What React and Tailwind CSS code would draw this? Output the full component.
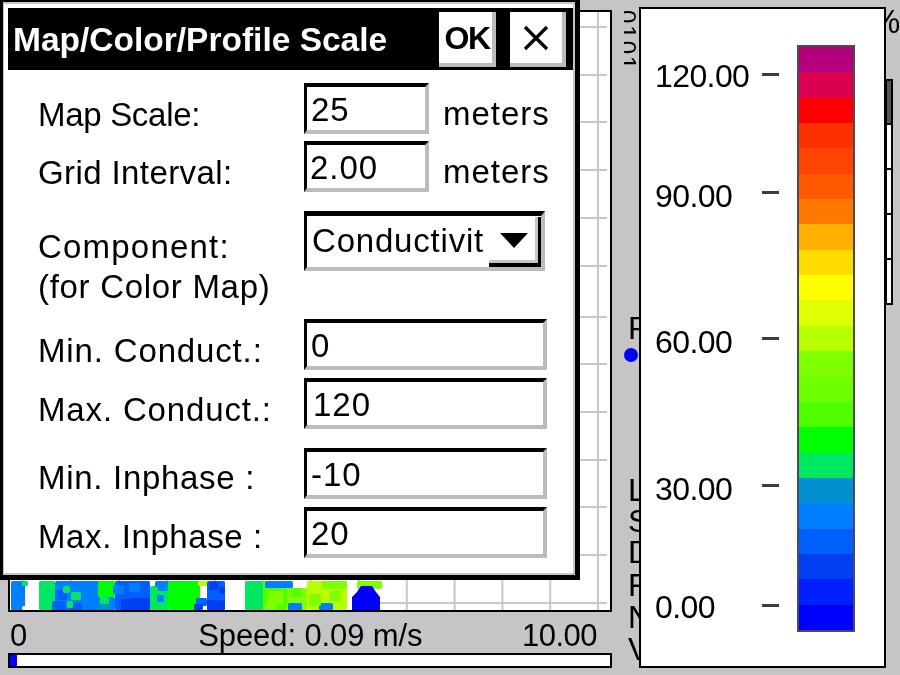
const FONT = "font-['Liberation_Sans',Arial,sans-serif]";

const bands = ['#b4007c','#dc0050','#ff0000','#ff3000','#ff4400','#ff5a00','#ff7800','#ffb000','#ffdc00','#ffff00','#e0ff00','#b8ff00','#80ff00','#70ff00','#50ff00','#00ff00','#00e860','#0090d0','#0080ff','#0060ff','#0040f0','#0020ff','#0000ff'];

const rects = [
  [11,581,14,29,'#0080ff'],[22,581,6,5,'#00e860'],[22,606,18,4,'#ffffff'],
  [39,581,16,29,'#00e860'],[55,581,45,29,'#0080ff'],[98,581,17,16,'#00ff00'],[98,597,17,13,'#0080ff'],
  [115,581,35,29,'#0060ff'],[130,598,20,12,'#0040f0'],[150,586,18,24,'#00e860'],[155,581,15,6,'#0080ff'],
  [168,581,32,29,'#00ff00'],[198,581,10,5,'#b8ff00'],[207,581,18,29,'#0060ff'],[207,600,18,10,'#0040f0'],
  [245,581,18,29,'#00e860'],[263,581,24,29,'#50ff00'],[265,581,28,7,'#0080ff'],[287,588,20,22,'#80ff00'],
  [307,581,40,29,'#b8ff00'],[322,581,25,8,'#80ff00'],[357,581,25,8,'#80ff00'],[352,606,28,4,'#0000ff'],
  // mosaic chips
  [55,590,12,10,'#0060ff'],[52,601,14,9,'#0060ff'],[68,603,14,7,'#0060ff'],[63,586,7,7,'#00e860'],[71,592,10,8,'#00e860'],[67,601,6,7,'#00e860'],
  [84,583,13,12,'#0080ff'],[100,596,9,9,'#00e860'],[98,604,12,6,'#0090d0'],[113,585,11,9,'#0080ff'],[129,583,11,9,'#0080ff'],[121,599,11,11,'#0040f0'],
  [157,595,7,7,'#0080ff'],[158,582,10,9,'#0080ff'],[196,598,11,8,'#0060ff'],[194,604,9,6,'#0040f0'],
  [209,582,9,8,'#0040f0'],[219,587,6,7,'#0040f0'],[268,591,15,14,'#80ff00'],[265,602,11,8,'#80ff00'],[288,603,14,7,'#0080ff'],[319,603,14,7,'#0080ff'],
  [309,594,12,12,'#80ff00'],[330,591,11,10,'#80ff00'],[291,588,10,9,'#50ff00'],
];
const gridX = [598,550.2,502.4,454.6,406.8,359,311,263,215,167,119,71,23];
const gridY = [603,555,507,460,412,364,317,266,218,170,122,75,27];

function Plot() {
  return (
    <svg className="block" width="600" height="598" viewBox="10 12 600 598">
      {gridX.map((x) => <rect key={x} x={x - 1} y="12" width="2" height="598" fill="#c8c6c8" />)}
      {gridY.map((y) => <rect key={y} x="12" y={y - 1} width="595" height="2" fill="#c8c6c8" />)}
      <rect x="25" y="581" width="15" height="29" fill="#ffffff" />
      <rect x="225" y="581" width="20" height="25" fill="#ffffff" />
      <rect x="347" y="581" width="10" height="23" fill="#ffffff" />
      {rects.map(([x, y, w, h, c], i) => <rect key={i} x={x} y={y} width={w} height={h} rx="1.5" fill={c} />)}
      <polygon points="352,610 352,597 357,592 361,586 372,586 376,592 380,597 380,610" fill="#0000ff" />
    </svg>
  );
}

function Field({ className = '', text, pad = 'pl-[4px]' }) {
  return (
    <div className={`h-[51px] border-t-[4px] border-l-[3px] border-r-[4px] border-b-[4px] border-t-black border-l-black border-r-[#bdbbbd] border-b-[#bdbbbd] bg-white pt-[3px] ${pad} ${className}`}>
      <span className="block text-[33px] leading-[40px] tracking-[1px] text-black">{text}</span>
    </div>
  );
}

function Row({ label, children, className = '', labelClass = '' }) {
  return (
    <div className={`flex h-[51px] items-start ${className}`}>
      <span className={`w-[266px] shrink-0 text-[33px] leading-[42px] whitespace-pre text-black ${labelClass}`}>{label}</span>
      {children}
    </div>
  );
}

function Dialog() {
  return (
    <div className={`absolute left-0 top-0 flex h-[580px] w-[580px] flex-col border-t-[2px] border-l-[3px] border-r-[5px] border-b-[5px] border-black bg-white ${FONT}`}>
      <div className="flex h-full flex-col border-t-[2px] border-l-[1px] border-r-[2px] border-b-[2px] border-[#c6c4c6] pl-[4px] pt-[4px]">
        <div className="flex h-[62px] items-center bg-black pl-[5px] pr-[7px] pt-[1px]">
          <span className="flex-1 text-[33.5px] font-bold leading-none whitespace-pre text-white">Map/Color/Profile Scale</span>
          <button className="h-[55px] w-[57px] border-r-[4px] border-b-[4px] border-[#bdbbbd] bg-white pl-[3px] text-[32px] font-bold leading-none tracking-[-1.5px] text-black">OK</button>
          <button className="ml-[14px] flex h-[55px] w-[56px] items-center justify-center border-r-[4px] border-b-[4px] border-[#bdbbbd] bg-white">
            <svg width="26" height="26" viewBox="0 0 26 26"><path d="M2 2 L24 24 M24 2 L2 24" stroke="#000" strokeWidth="3.2" fill="none" /></svg>
          </button>
        </div>
        <div className="flex flex-col pl-[30px] pt-[13px]">
          <Row label="Map Scale:" labelClass="pt-[11px] tracking-[-0.3px]">
            <Field className="w-[125px]" text="25" />
            <span className="ml-[14px] pt-[10px] text-[33px] leading-[42px] tracking-[1px] text-black">meters</span>
          </Row>
          <Row label="Grid Interval:" labelClass="pt-[11px] tracking-[0.4px]" className="mt-[7px]">
            <Field className="w-[125px]" text="2.00" pad="pl-[3px]" />
            <span className="ml-[14px] pt-[10px] text-[33px] leading-[42px] tracking-[1px] text-black">meters</span>
          </Row>
          <div className="mt-[19px] flex h-[108px] items-start">
            <div className="w-[266px] shrink-0 pt-[16px] text-[33px] leading-[40px] text-black">
              <div className="tracking-[1.2px]">Component:</div>
              <div className="tracking-[0.7px]">(for Color Map)</div>
            </div>
            <div className="flex h-[60px] w-[241px] items-start border-t-[5px] border-l-[3px] border-r-[4px] border-b-[4px] border-t-black border-l-black border-r-[#bdbbbd] border-b-[#bdbbbd] bg-white">
              <span className="w-[182px] overflow-hidden pl-[5px] pt-[4px] text-[33px] leading-[42px] tracking-[0.8px] whitespace-pre text-black">Conductivit</span>
              <div className="mt-[1px] flex h-[50px] w-[52px] items-center justify-center border-r-[3px] border-b-[4px] border-r-black border-b-black bg-white shadow-[inset_-3px_-3px_0_#c6c4c6]">
                <svg width="28" height="15" viewBox="0 0 28 15"><path d="M0 0 H28 L14 15 Z" fill="#000" /></svg>
              </div>
            </div>
          </div>
          <Row label="Min. Conduct.:" labelClass="pt-[11px] tracking-[0.85px]"><Field className="w-[243px]" text="0" /></Row>
          <Row label="Max. Conduct.:" labelClass="pt-[11px] tracking-[0.85px]" className="mt-[8px]"><Field className="w-[243px]" text="120" pad="pl-[6px]" /></Row>
          <Row label="Min. Inphase :" labelClass="pt-[9px] tracking-[0.7px]" className="mt-[19px]"><Field className="w-[243px]" text="-10" /></Row>
          <Row label="Max. Inphase :" labelClass="pt-[9px] tracking-[0.6px]" className="mt-[8px]"><Field className="w-[243px]" text="20" /></Row>
        </div>
      </div>
    </div>
  );
}

const legend = [
  { v: '120.00', mt: 'mt-0', tick: 'mb-[4px]' },
  { v: '90.00', mt: 'mt-[90px]', tick: 'mb-[8px]' },
  { v: '60.00', mt: 'mt-[116px]', tick: 'mb-[8px]' },
  { v: '30.00', mt: 'mt-[117px]', tick: 'mb-[8px]' },
  { v: '0.00', mt: 'mt-[88px]', tick: 'mb-[4px]' },
];

export default function App() {
  return (
    <div className={`relative flex h-[675px] w-[900px] overflow-hidden bg-[#c6c4c6] blur-[0.6px] ${FONT}`}>
      <div className="ml-[8px] flex w-[604px] shrink-0 flex-col pt-[10px]">
        <div className="h-[602px] border-2 border-black bg-white"><Plot /></div>
        <div className="flex h-[41px] items-center pl-[2px] pr-[15px] pt-[6px] text-[31px] leading-none text-black">
          <span>0</span>
          <span className="ml-[171px] tracking-[-0.1px]">Speed: 0.09 m/s</span>
          <span className="ml-auto tracking-[-0.5px]">10.00</span>
        </div>
        <div className="h-[15px] border-2 border-black bg-white"><div className="h-full w-[7px] bg-[#0000ff]" /></div>
      </div>

      <div className="relative ml-[12px] flex w-[15px] shrink-0 flex-col overflow-hidden text-[32px] leading-none text-black">
        <span className="ml-[3px] mt-[10px] h-[59px] text-[24px] tracking-[2px] [writing-mode:vertical-rl]">0101</span>
        <span className="ml-[4px] mt-[243px] h-[36px]">P</span>
        <div className="h-[14px] w-[14px] rounded-full bg-[#0000ff]" />
        <span className="ml-[4px] mt-[112px] h-[31px]">L</span>
        <span className="ml-[4px] h-[31px]">S</span>
        <span className="ml-[4px] h-[33px]">D</span>
        <span className="ml-[4px] h-[32px]">F</span>
        <span className="ml-[4px] h-[32px]">N</span>
        <span className="ml-[4px] h-[28px]">V</span>
      </div>

      <div className="z-10 mt-[7px] flex h-[661px] w-[247px] shrink-0 border-2 border-black bg-white pl-[14px] pt-[36px]">
        <div className="flex w-[124px] shrink-0 flex-col pt-[16px]">
          {legend.map((l) => (
            <div key={l.v} className={`flex h-[30px] items-center justify-between text-[32px] leading-none tracking-[-0.6px] text-black ${l.mt}`}>
              <span>{l.v}</span>
              <div className={`h-[3px] w-[17px] bg-[#3c3c3c] ${l.tick}`} />
            </div>
          ))}
        </div>
        <div className="ml-[18px] flex h-[587px] w-[58px] shrink-0 flex-col border-2 border-[#4a4a5a]">
          {bands.map((c) => <div key={c} className="flex-1" style={{ backgroundColor: c }} />)}
        </div>
      </div>

      <div className="-ml-[1px] flex flex-1 flex-col overflow-hidden text-black">
        <span className="-ml-[14px] mt-[5px] h-[74px] text-[33px] leading-none">%</span>
        <div className="h-[46px] w-[8px] border-2 border-black bg-[#555]" />
        <div className="h-[45px] w-[8px] border-2 border-t-0 border-black bg-white" />
        <div className="h-[45px] w-[8px] border-2 border-t-0 border-black bg-white" />
        <div className="h-[45px] w-[8px] border-2 border-t-0 border-black bg-white" />
        <div className="h-[45px] w-[8px] border-2 border-t-0 border-black bg-white" />
      </div>

      <Dialog />
    </div>
  );
}
